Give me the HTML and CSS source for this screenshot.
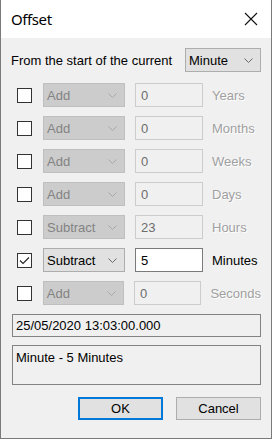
FILE: index.html
```html
<!DOCTYPE html>
<html lang="en">
  <head>
    <meta charset="UTF-8" />
    <title>Offset</title>
    <link rel="stylesheet" href="styles.css">
  </head>
  <body>
    <div class="window">
      <div class="titlebar">
        <span class="title">Offset</span>
        <svg class="close" width="14" height="14" viewBox="0 0 14 14">
          <path d="M1 1 L13 13 M13 1 L1 13" stroke="#111" stroke-width="1.1" fill="none" />
        </svg>
      </div>

      <div class="content">
        <div class="from-row">
          <span>From the start of the current</span>
          <div class="combo combo-unit">
            <span>Minute</span>
            <svg class="chev" width="9" height="5" viewBox="0 0 9 5"><path d="M0.5 0.5 L4.5 4.5 L8.5 0.5" /></svg>
          </div>
        </div>

        <div class="rows">
          <div class="row">
            <div class="check"></div>
            <div class="combo disabled"><span>Add</span><svg class="chev" width="9" height="5" viewBox="0 0 9 5"><path d="M0.5 0.5 L4.5 4.5 L8.5 0.5" /></svg></div>
            <div class="field disabled">0</div>
            <span class="unit disabled">Years</span>
          </div>
          <div class="row">
            <div class="check"></div>
            <div class="combo disabled"><span>Add</span><svg class="chev" width="9" height="5" viewBox="0 0 9 5"><path d="M0.5 0.5 L4.5 4.5 L8.5 0.5" /></svg></div>
            <div class="field disabled">0</div>
            <span class="unit disabled">Months</span>
          </div>
          <div class="row">
            <div class="check"></div>
            <div class="combo disabled"><span>Add</span><svg class="chev" width="9" height="5" viewBox="0 0 9 5"><path d="M0.5 0.5 L4.5 4.5 L8.5 0.5" /></svg></div>
            <div class="field disabled">0</div>
            <span class="unit disabled">Weeks</span>
          </div>
          <div class="row">
            <div class="check"></div>
            <div class="combo disabled"><span>Add</span><svg class="chev" width="9" height="5" viewBox="0 0 9 5"><path d="M0.5 0.5 L4.5 4.5 L8.5 0.5" /></svg></div>
            <div class="field disabled">0</div>
            <span class="unit disabled">Days</span>
          </div>
          <div class="row">
            <div class="check"></div>
            <div class="combo disabled"><span>Subtract</span><svg class="chev" width="9" height="5" viewBox="0 0 9 5"><path d="M0.5 0.5 L4.5 4.5 L8.5 0.5" /></svg></div>
            <div class="field disabled">23</div>
            <span class="unit disabled">Hours</span>
          </div>
          <div class="row">
            <div class="check checked">
              <svg width="13" height="13" viewBox="0 0 13 13"><path d="M2 6.5 L5 9.5 L11 3.5" stroke="#222" stroke-width="1.1" fill="none" /></svg>
            </div>
            <div class="combo"><span>Subtract</span><svg class="chev" width="9" height="5" viewBox="0 0 9 5"><path d="M0.5 0.5 L4.5 4.5 L8.5 0.5" /></svg></div>
            <div class="field">5</div>
            <span class="unit">Minutes</span>
          </div>
          <div class="row">
            <div class="check"></div>
            <div class="combo disabled"><span>Add</span><svg class="chev" width="9" height="5" viewBox="0 0 9 5"><path d="M0.5 0.5 L4.5 4.5 L8.5 0.5" /></svg></div>
            <div class="field disabled">0</div>
            <span class="unit disabled">Seconds</span>
          </div>
        </div>

        <div class="result">25/05/2020 13:03:00.000</div>
        <div class="summary">Minute - 5 Minutes</div>

        <div class="buttons">
          <button class="btn btn-default">OK</button>
          <button class="btn">Cancel</button>
        </div>
      </div>
    </div>
  </body>
</html>
```

FILE: styles.css
```css
html,
body {
  margin: 0;
  padding: 0;
  background-color: #ffffff;
}

.window {
  width: 272px;
  height: 439px;
  box-sizing: border-box;
  border: 1px solid #7a7a7a;
  border-top: none;
  background-color: #f0f0f0;
  font-family: "Liberation Sans", Arial, sans-serif;
  font-size: 13px;
  color: #000;
  display: flex;
  flex-direction: column;
}

.titlebar {
  height: 38px;
  background-color: #fff;
  display: flex;
  align-items: center;
  justify-content: space-between;
  padding: 0 13px 0 10px;
  flex-shrink: 0;
}

.title {
  font-family: "Noto Sans", "Open Sans", sans-serif;
  font-size: 15px;
  letter-spacing: -0.4px;
}

.content {
  padding: 10px 10px 0 10px;
  display: flex;
  flex-direction: column;
}

.from-row {
  display: flex;
  align-items: center;
  justify-content: space-between;
  height: 24px;
}

.combo {
  width: 82px;
  height: 24px;
  box-sizing: border-box;
  border: 1px solid #adadad;
  background-color: #e1e1e1;
  display: flex;
  align-items: center;
  justify-content: space-between;
  padding: 0 7px 0 3px;
}

.combo-unit {
  width: 76px;
}

.chev path {
  fill: none;
  stroke: #6a6a6a;
  stroke-width: 1;
}

.combo.disabled {
  background-color: #cccccc;
  border-color: #bfbfbf;
  color: #838383;
}

.combo.disabled .chev path {
  stroke: #a8a8a8;
}

.rows {
  display: flex;
  flex-direction: column;
  gap: 9px;
  margin-top: 11px;
}

.row {
  display: flex;
  align-items: center;
  height: 24px;
  padding-left: 6px;
}

.check {
  width: 15px;
  height: 15px;
  box-sizing: border-box;
  border: 1px solid #333;
  background-color: #fff;
  margin-right: 11px;
  display: flex;
  align-items: center;
  justify-content: center;
}

.field {
  width: 68px;
  height: 24px;
  box-sizing: border-box;
  border: 1px solid #7a7a7a;
  background-color: #fff;
  margin-left: 10px;
  display: flex;
  align-items: center;
  padding-left: 5px;
}

.field.disabled {
  background-color: #f0f0f0;
  border-color: #cccccc;
  color: #6d6d6d;
}

.unit {
  margin-left: 9px;
}

.unit.disabled {
  color: #a0a0a0;
  text-shadow: 1px 1px 0 #ffffff;
}

.result {
  margin-top: 9px;
  margin-left: 1px;
  height: 23px;
  box-sizing: border-box;
  border: 1px solid #828282;
  display: flex;
  align-items: center;
  padding-left: 3px;
}

.summary {
  margin-top: 8px;
  margin-left: 1px;
  height: 40px;
  box-sizing: border-box;
  border: 1px solid #828282;
  padding: 4px 3px;
}

.buttons {
  display: flex;
  justify-content: flex-end;
  gap: 13px;
  margin-top: 12px;
}

.btn {
  width: 85px;
  height: 23px;
  box-sizing: border-box;
  border: 1px solid #adadad;
  background-color: #e1e1e1;
  font-family: "Liberation Sans", Arial, sans-serif;
  font-size: 13px;
  color: #000;
  padding: 0;
}

.btn-default {
  border: 2px solid #0078d7;
}
```
